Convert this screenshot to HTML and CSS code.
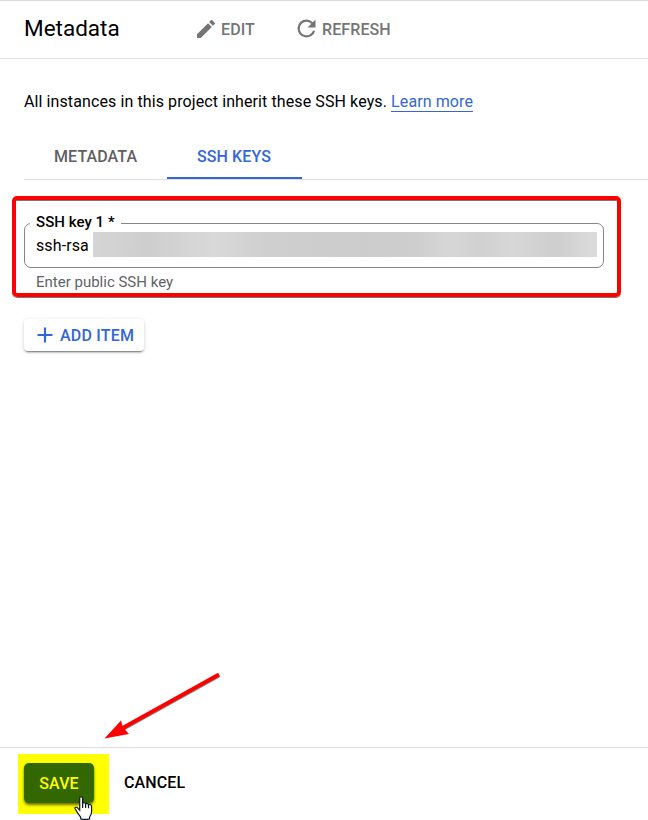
FILE: index.html
```html
<!DOCTYPE html>
<html lang="en">
<head>
<meta charset="utf-8">
<title>Metadata</title>
<link rel="stylesheet" href="styles.css">
</head>
<body>
<div class="page">
  <header class="header">
    <h1 class="title"><span>Metadata</span></h1>
    <button class="action edit"><svg width="24" height="24" viewBox="0 0 24 24"><path d="M3 17.25V21h3.75L17.81 9.94l-3.75-3.75L3 17.25zM20.71 7.04a1 1 0 0 0 0-1.41l-2.34-2.34a1 1 0 0 0-1.41 0l-1.83 1.83 3.75 3.75 1.83-1.83z"/></svg><span>EDIT</span></button>
    <button class="action refresh"><svg width="27" height="27" viewBox="0 0 24 24"><path d="M17.65 6.35A7.96 7.96 0 0 0 12 4a8 8 0 1 0 7.73 10h-2.08A6 6 0 1 1 12 6c1.66 0 3.14.69 4.22 1.78L13 11h7V4l-2.35 2.35z"/></svg><span>REFRESH</span></button>
  </header>
  <main class="main">
    <p class="intro"><span>All instances in this project inherit these SSH keys.</span> <a class="learn" href="#">Learn more</a></p>
    <nav class="tabs">
      <a class="tab tab-metadata"><span>METADATA</span></a>
      <a class="tab tab-ssh active"><span>SSH KEYS</span></a>
    </nav>
    <section class="highlight">
      <div class="field">
        <span class="label">SSH key 1 *</span>
        <span class="value">ssh-rsa</span>
        <span class="redacted"></span>
      </div>
      <div class="hint"><span>Enter public SSH key</span></div>
    </section>
    <button class="add"><svg width="16" height="16" viewBox="0 0 16 16"><path d="M8 .5v15M.5 8h15"/></svg><span>ADD ITEM</span></button>
  </main>
  <footer class="footer">
    <div class="marker"><button class="save"><span>SAVE</span></button></div>
    <button class="cancel"><span>CANCEL</span></button>
    <svg class="cursor" width="19" height="24" viewBox="0 0 19 24"><path d="M5.7 14.2V2.3C5.7.3 8.6.3 8.6 2.3V7.5C9.7 6.2 11.2 6.7 11.6 8 12.6 7 14.1 7.5 14.4 8.8 15.8 8 17.6 9 17.6 10.8V15.5C17.6 18.6 16 20 15.6 21.2V22.8Q11 24 6.7 22.8V21.2C5.2 19.1 3.6 17.4 2.5 15.1L1 12.6C.5 11.4 2.4 10.8 3.3 11.7Z"/><path class="knuckles" d="M8.6 7.5v4.5M11.6 8v4M14.5 8.9v3.4"/></svg>
    <svg class="arrow" width="120" height="72" viewBox="0 0 120 72"><g class="arrow-shadow"><path d="M118 4.5 19 59.5"/></g><g><path d="M118 3.5 19 58.5"/><path class="head" d="M3.5 67.5 20 49.5 22 56.5 28 63Z"/></g></svg>
  </footer>
</div>
</body>
</html>
```
FILE: styles.css
```css
* { box-sizing: border-box; }
body { margin: 0; background: #fff; color: #000; font: 16px/20px Roboto, sans-serif; letter-spacing: .1px; }
button { padding: 0; border: 0; background: none; font: 500 16px/20px Roboto, sans-serif; letter-spacing: .1px; white-space: nowrap; }
.page { display: flex; flex-direction: column; height: 820px; overflow: hidden; }
.header { display: flex; align-items: center; height: 59px; flex: none; padding: 0 0 2px 24px; border-top: 1px solid #dadce0; border-bottom: 1px solid #e0e0e0; }
.title { width: 170px; margin: 0; padding-bottom: 1px; font-size: 22.5px; line-height: 30px; font-weight: 400; letter-spacing: 0; }
.action { display: flex; align-items: center; color: #757575; }
.action svg { fill: #757575; }
.action span { padding-top: 2px; }
.edit { gap: 3px; width: 99px; }
.refresh { gap: 2px; }
.main { flex: 1; padding: 33px 27px 0 24px; }
.main, .footer { white-space: nowrap; }
.intro { height: 20px; margin: 0; }
.learn { display: inline-block; height: 20px; color: #3367d6; text-decoration: none; border-bottom: 1px solid #3367d6; }
.tabs { display: flex; height: 47px; margin: 21px -27px 0 0; border-bottom: 1px solid #e0e0e0; font-weight: 500; }
.tab { padding-top: 14px; padding-left: 30px; color: #5f5f5f; }
.tab-metadata { width: 143px; }
.tab-ssh { width: 135px; }
.active { color: #3367d6; border-bottom: 2px solid #3367d6; }
.highlight { width: 609px; height: 101px; margin: 16px 0 0 -12px; padding: 23px 8px 0; border: 4px solid #f00; border-radius: 5px; box-shadow: inset 0 1px 0 #777, 0 1px 0 #777; }
.field { position: relative; display: flex; align-items: center; gap: 4px; width: 580px; height: 45px; padding: 0 6px 1px 11px; border: 1px solid #80868b; border-radius: 7px; }
.label { position: absolute; left: 5px; top: -12px; padding: 0 6px; background: #fff; font-size: 15px; font-weight: 500; letter-spacing: .05px; }
.value { padding-top: 2px; }
.redacted { flex: 1; height: 25px; margin-top: -1px; background: linear-gradient(90deg, #d5d5d5, #cecece 11%, #d9d9d9 24%, #cfcfcf 34%, #ccc 54%, #cecece 64%, #d7d7d7 71%, #d0d0d0 77%, #d7d7d7 83%, #cecece 92%, #dcdcdc); }
.hint { padding: 4px 0 0 12px; color: #5f6368; font-size: 15px; letter-spacing: 0; }
.add { display: flex; align-items: center; gap: 7px; width: 120px; height: 32px; margin-top: 22px; padding-left: 13px; border-radius: 4px; color: #3367d6; background: #fff; box-shadow: 0 2px 2px -1px #0008, 0 1px 5px #0002; }
.add svg { fill: none; stroke: #3367d6; stroke-width: 2.2; }
.add span { padding-top: 2px; letter-spacing: .2px; }
.footer { position: relative; display: flex; height: 73px; flex: none; padding: 6px 0 0 18px; border-top: 1px solid #e0e0e0; }
.marker { width: 91px; height: 60px; padding: 9px 6px; background: #ff0; }
.save { width: 70px; height: 40px; padding-top: 1px; border-radius: 5px; background: #336700; color: #ff0; box-shadow: 0 2px 3px #6c6c00; }
.cancel { height: 20px; margin: 19px 0 0 15px; }
.cursor { position: absolute; left: 74px; top: 48px; fill: #fff; stroke: #111827; stroke-width: 1.2; }
.knuckles { fill: none; }
.arrow { position: absolute; left: 101px; top: -77px; fill: none; stroke: #f00; stroke-width: 4; }
.head { fill: #f00; stroke: none; }
.arrow-shadow { stroke: #888; }
```
